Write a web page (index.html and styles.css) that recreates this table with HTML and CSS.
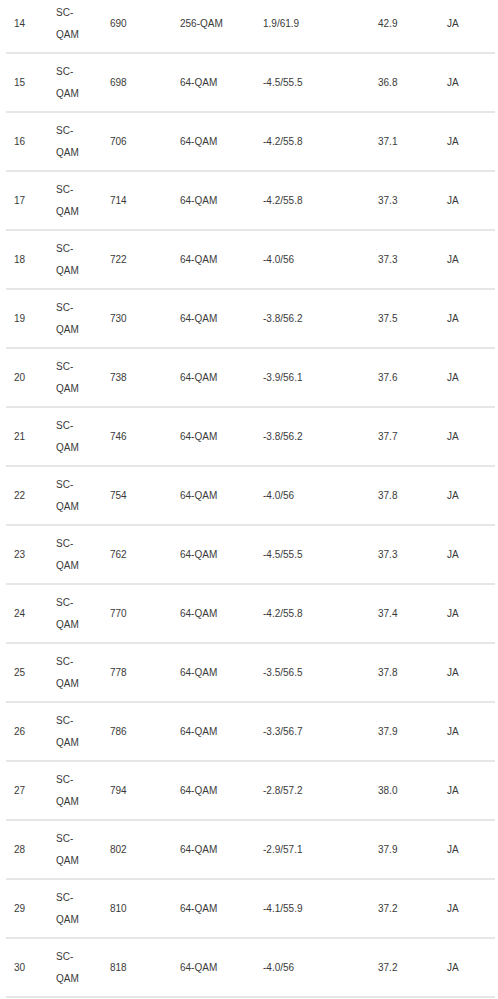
FILE: index.html
```html
<!DOCTYPE html>
<html lang="en">
<head>
    <meta charset="UTF-8">
    <meta name="viewport" content="width=device-width, initial-scale=1.0">
    <title>Downstream Channels</title>
    <link rel="stylesheet" href="styles.css">
</head>
<body>
    <div class="table-wrap">
        <table class="channels">
            <colgroup>
                <col class="c-id">
                <col class="c-type">
                <col class="c-freq">
                <col class="c-mod">
                <col class="c-power">
                <col class="c-snr">
                <col class="c-lock">
            </colgroup>
            <tbody>
                <tr><td>14</td><td>SC-QAM</td><td>690</td><td>256-QAM</td><td>1.9/61.9</td><td>42.9</td><td>JA</td></tr>
                <tr><td>15</td><td>SC-QAM</td><td>698</td><td>64-QAM</td><td>-4.5/55.5</td><td>36.8</td><td>JA</td></tr>
                <tr><td>16</td><td>SC-QAM</td><td>706</td><td>64-QAM</td><td>-4.2/55.8</td><td>37.1</td><td>JA</td></tr>
                <tr><td>17</td><td>SC-QAM</td><td>714</td><td>64-QAM</td><td>-4.2/55.8</td><td>37.3</td><td>JA</td></tr>
                <tr><td>18</td><td>SC-QAM</td><td>722</td><td>64-QAM</td><td>-4.0/56</td><td>37.3</td><td>JA</td></tr>
                <tr><td>19</td><td>SC-QAM</td><td>730</td><td>64-QAM</td><td>-3.8/56.2</td><td>37.5</td><td>JA</td></tr>
                <tr><td>20</td><td>SC-QAM</td><td>738</td><td>64-QAM</td><td>-3.9/56.1</td><td>37.6</td><td>JA</td></tr>
                <tr><td>21</td><td>SC-QAM</td><td>746</td><td>64-QAM</td><td>-3.8/56.2</td><td>37.7</td><td>JA</td></tr>
                <tr><td>22</td><td>SC-QAM</td><td>754</td><td>64-QAM</td><td>-4.0/56</td><td>37.8</td><td>JA</td></tr>
                <tr><td>23</td><td>SC-QAM</td><td>762</td><td>64-QAM</td><td>-4.5/55.5</td><td>37.3</td><td>JA</td></tr>
                <tr><td>24</td><td>SC-QAM</td><td>770</td><td>64-QAM</td><td>-4.2/55.8</td><td>37.4</td><td>JA</td></tr>
                <tr><td>25</td><td>SC-QAM</td><td>778</td><td>64-QAM</td><td>-3.5/56.5</td><td>37.8</td><td>JA</td></tr>
                <tr><td>26</td><td>SC-QAM</td><td>786</td><td>64-QAM</td><td>-3.3/56.7</td><td>37.9</td><td>JA</td></tr>
                <tr><td>27</td><td>SC-QAM</td><td>794</td><td>64-QAM</td><td>-2.8/57.2</td><td>38.0</td><td>JA</td></tr>
                <tr><td>28</td><td>SC-QAM</td><td>802</td><td>64-QAM</td><td>-2.9/57.1</td><td>37.9</td><td>JA</td></tr>
                <tr><td>29</td><td>SC-QAM</td><td>810</td><td>64-QAM</td><td>-4.1/55.9</td><td>37.2</td><td>JA</td></tr>
                <tr><td>30</td><td>SC-QAM</td><td>818</td><td>64-QAM</td><td>-4.0/56</td><td>37.2</td><td>JA</td></tr>
            </tbody>
        </table>
    </div>
</body>
</html>
```

FILE: styles.css
```css
/* Page */
body {
    margin: 0;
    font-family: 'Liberation Sans', Arial, sans-serif;
    font-size: 10px;
    color: #3a3a3a;
    background: #fff;
    overflow: hidden;
}

/* scrolled a few pixels into the table */
.table-wrap {
    margin-top: -5px;
    padding-left: 6px;
    padding-right: 3px;
}

.channels {
    width: 100%;
    border-collapse: collapse;
    table-layout: fixed;
}

.c-id { width: 42px; }
.c-type { width: 54px; }
.c-freq { width: 70px; }
.c-mod { width: 83px; }
.c-power { width: 115px; }
.c-snr { width: 69px; }

.channels td {
    padding: 7px 8px 6px;
    line-height: 22px;
    vertical-align: middle;
    text-align: left;
    border-bottom: 2px solid #e6e6e6;
}
```
